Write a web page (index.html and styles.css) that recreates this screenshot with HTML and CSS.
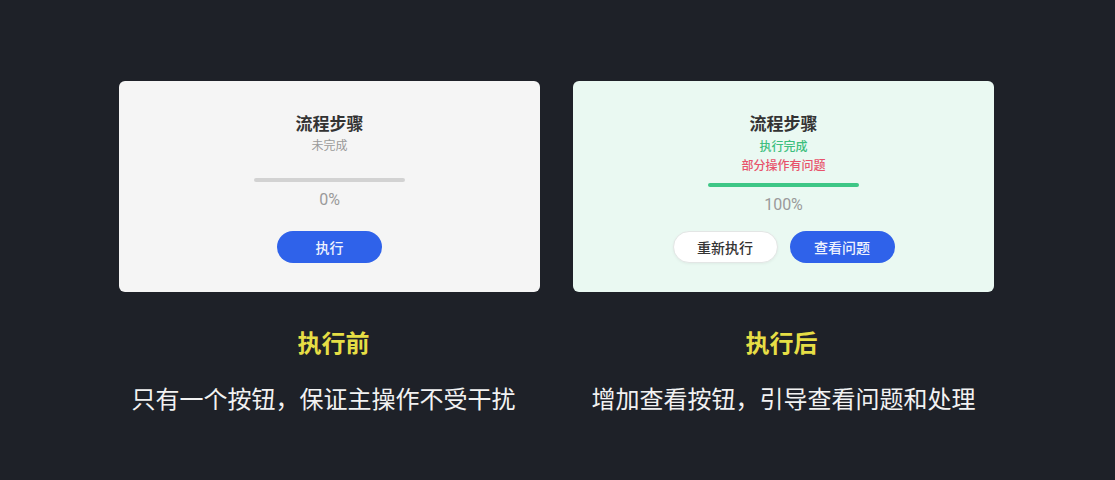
FILE: index.html
```html
<!DOCTYPE html>
<html lang="zh-CN">
<head>
<meta charset="utf-8">
<title>流程步骤</title>
<link rel="stylesheet" href="styles.css">
</head>
<body>
<main class="stage">
  <section class="col">
    <div class="card card-before">
      <div class="title">流程步骤</div>
      <div class="status status-muted">未完成</div>
      <div class="bar bar-empty"></div>
      <div class="percent">0%</div>
      <div class="actions">
        <button class="btn btn-primary">执行</button>
      </div>
    </div>
    <div class="label label-left">执行前</div>
    <div class="desc desc-left">只有一个按钮，保证主操作不受干扰</div>
  </section>
  <section class="col">
    <div class="card card-after">
      <div class="title">流程步骤</div>
      <div class="status status-ok">执行完成</div>
      <div class="status status-warn">部分操作有问题</div>
      <div class="bar bar-full"></div>
      <div class="percent">100%</div>
      <div class="actions">
        <button class="btn btn-default">重新执行</button>
        <button class="btn btn-primary">查看问题</button>
      </div>
    </div>
    <div class="label label-right">执行后</div>
    <div class="desc">增加查看按钮，引导查看问题和处理</div>
  </section>
</main>
</body>
</html>
```
FILE: styles.css
```css
html, body {
  margin: 0;
  padding: 0;
}
body {
  background: #1e2128;
  font-family: Roboto, "Noto Sans CJK SC", sans-serif;
  width: 1115px;
  height: 480px;
  overflow: hidden;
}
.stage {
  display: flex;
  justify-content: center;
  gap: 33px;
  padding-top: 81px;
  padding-right: 2px;
}
.col {
  width: 421px;
  display: flex;
  flex-direction: column;
  align-items: center;
}
.card {
  width: 421px;
  height: 211px;
  box-sizing: border-box;
  border-radius: 6px;
  padding: 32px 0 29px;
  display: flex;
  flex-direction: column;
  align-items: center;
}
.card-before {
  background: #f5f5f5;
}
.card-after {
  background: #eaf9f2;
}
.title {
  font-size: 17px;
  line-height: 22px;
  font-weight: 700;
  color: #333333;
}
.status {
  font-size: 12px;
  line-height: 18px;
  font-weight: 500;
}
.status-muted {
  color: #9a9a9a;
  margin-top: 2px;
  font-weight: 400;
}
.status-ok {
  color: #3dbf7e;
  margin-top: 3px;
}
.status-warn {
  color: #e8526b;
  margin-top: 1px;
}
.bar {
  width: 151px;
  height: 4px;
  border-radius: 2px;
}
.bar-empty {
  background: #d2d2d2;
  margin-top: 23px;
}
.bar-full {
  background: #3ec786;
  margin-top: 8px;
}
.percent {
  margin-top: 8px;
  font-size: 16px;
  line-height: 20px;
  color: #9a9a9a;
}
.actions {
  margin-top: auto;
  display: flex;
  gap: 12px;
}
.btn {
  width: 105px;
  height: 32px;
  border-radius: 16px;
  font-family: "Noto Sans CJK SC", sans-serif;
  font-size: 14px;
  line-height: 20px;
  padding: 0;
  cursor: pointer;
}
.btn-primary {
  background: #2f62ea;
  color: #eef2fe;
  border: none;
  font-weight: 500;
}
.btn-default {
  background: #ffffff;
  color: #333333;
  border: 1px solid #e3e6e5;
  font-weight: 500;
  box-shadow: 0 1px 3px rgba(0, 0, 0, 0.05);
}
.label {
  margin-top: 33px;
  font-family: "Noto Sans CJK SC", sans-serif;
  font-size: 24px;
  line-height: 34px;
  font-weight: 700;
  color: #e6de45;
}
.label-left {
  margin-left: 8px;
}
.label-right {
  margin-right: 4px;
}
.desc {
  margin-top: 22px;
  font-family: "Noto Sans CJK SC", sans-serif;
  font-size: 24px;
  line-height: 34px;
  color: #f2f2f2;
}
.desc-left {
  margin-right: 12px;
}
```
